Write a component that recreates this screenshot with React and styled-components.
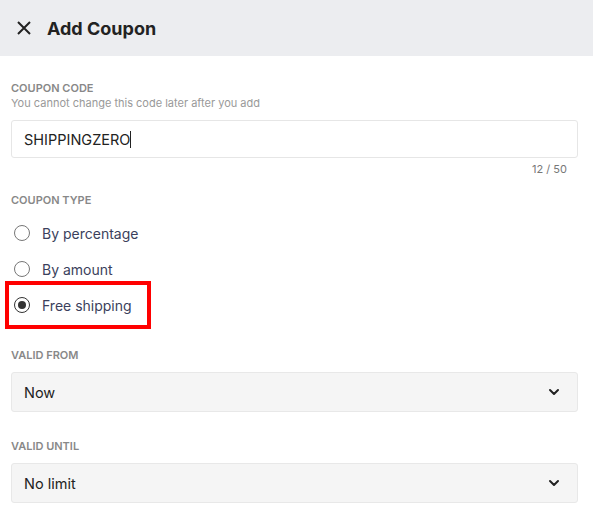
import React from 'react'
import styled, { createGlobalStyle } from 'styled-components'

const Global = createGlobalStyle`
  body { margin: 0; font-family: Inter, "Liberation Sans", sans-serif; background: #fff; }
`

const Header = styled.div`
  height: 56px;
  background: #ecedf0;
  display: flex;
  align-items: center;
  padding: 0 16px;
  gap: 15px;
`

const Title = styled.h1`
  margin: 0;
  font-size: 18px;
  font-weight: 700;
  color: #222;
`

const Body = styled.div`
  padding: 25px 15px 0 11px;
`

const Label = styled.div`
  font-size: 11px;
  font-weight: 600;
  color: #888;
  margin-top: ${p => p.$top || 0}px;
`

const Hint = styled.div`
  font-size: 11px;
  color: #999;
  margin-top: 1px;
`

const Input = styled.div`
  margin-top: 10px;
  height: 38px;
  box-sizing: border-box;
  border: 1px solid #e6e6e6;
  border-radius: 3px;
  display: flex;
  align-items: center;
  padding: 0 12px;
  font-size: 14.5px;
  color: #222;
`

const Caret = styled.span`
  display: inline-block;
  width: 1px;
  height: 17px;
  background: #222;
`

const Counter = styled.div`
  text-align: right;
  font-size: 11px;
  color: #777;
  margin-top: 4px;
  padding-right: 11px;
`

const RadioList = styled.div`
  margin-top: 8px;
  display: flex;
  flex-direction: column;
`

const RadioRow = styled.div`
  height: 36px;
  display: flex;
  align-items: center;
  gap: 12px;
  padding-left: 3px;
  font-size: 14px;
  color: #3b3f5c;
  position: relative;
`

const Circle = styled.span`
  width: 14px;
  height: 14px;
  border: 1.5px solid ${p => (p.$on ? '#333' : '#777')};
  border-radius: 50%;
  display: flex;
  align-items: center;
  justify-content: center;
  &::after {
    content: '';
    display: ${p => (p.$on ? 'block' : 'none')};
    width: 8px;
    height: 8px;
    border-radius: 50%;
    background: #333;
  }
`

const Highlight = styled.span`
  position: absolute;
  left: -6px;
  top: -6px;
  width: 146px;
  height: 48px;
  box-sizing: border-box;
  border: 4px solid #f00;
`

const Select = styled.div`
  margin-top: 10px;
  height: 40px;
  box-sizing: border-box;
  background: #f5f5f5;
  border: 1px solid #e8e8e8;
  border-radius: 3px;
  display: flex;
  align-items: center;
  justify-content: space-between;
  padding: 0 17px 0 12px;
  font-size: 14.5px;
  color: #222;
`

const Chevron = () => (
  <svg width="12" height="8" viewBox="0 0 12 8" fill="none">
    <path d="M2 2l4 4 4-4" stroke="#222" strokeWidth="2" strokeLinecap="round" strokeLinejoin="round" />
  </svg>
)

const options = ['By percentage', 'By amount', 'Free shipping']

export default function App() {
  return (
    <>
      <Global />
      <Header>
        <svg width="16" height="16" viewBox="0 0 16 16">
          <path d="M2 2l12 12M14 2L2 14" stroke="#222" strokeWidth="2" />
        </svg>
        <Title>Add Coupon</Title>
      </Header>
      <Body>
        <Label>COUPON CODE</Label>
        <Hint>You cannot change this code later after you add</Hint>
        <Input>SHIPPINGZERO<Caret /></Input>
        <Counter>12 / 50</Counter>
        <Label $top={17}>COUPON TYPE</Label>
        <RadioList>
          {options.map((o, i) => (
            <RadioRow key={o}>
              <Circle $on={i === 2} />
              {o}
              {i === 2 && <Highlight />}
            </RadioRow>
          ))}
        </RadioList>
        <Label $top={25}>VALID FROM</Label>
        <Select>Now<Chevron /></Select>
        <Label $top={27}>VALID UNTIL</Label>
        <Select>No limit<Chevron /></Select>
      </Body>
    </>
  )
}
